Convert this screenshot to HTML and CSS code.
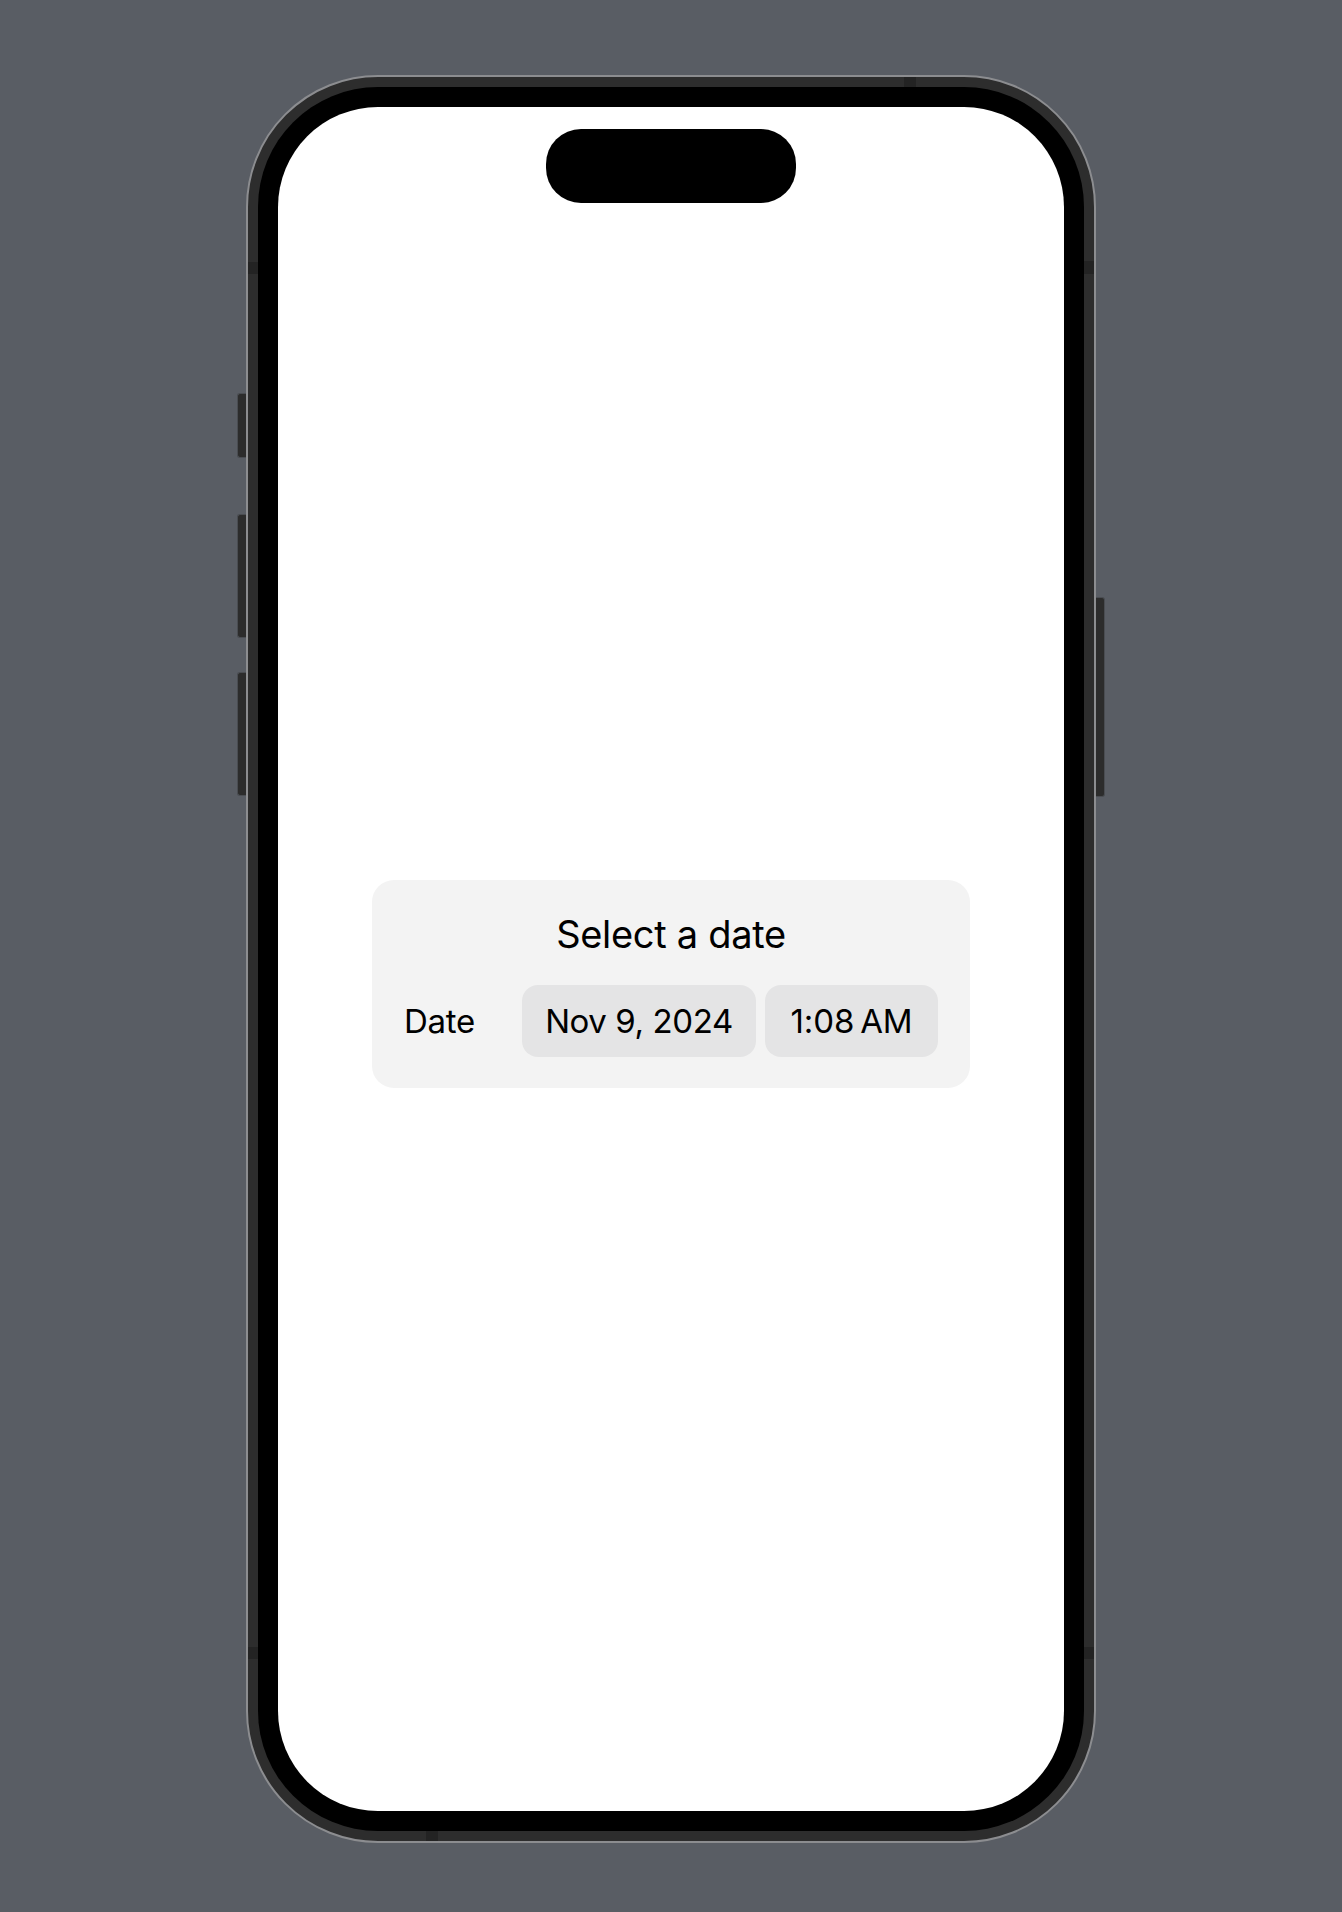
FILE: index.html
```html
<!DOCTYPE html>
<html lang="en">
<head>
<meta charset="utf-8">
<title>Select a date</title>
<link rel="stylesheet" href="styles.css">
</head>
<body>
  <div class="stage">
    <div class="device">
      <span class="side-btn left b1"></span>
      <span class="side-btn left b2"></span>
      <span class="side-btn left b3"></span>
      <span class="side-btn right b4"></span>
      <div class="frame">
        <span class="band-mark m-top"></span>
        <span class="band-mark m-left1"></span>
        <span class="band-mark m-right1"></span>
        <span class="band-mark m-left2"></span>
        <span class="band-mark m-right2"></span>
        <span class="band-mark m-bottom"></span>
        <div class="bezel">
          <div class="screen">
            <div class="island"></div>
            <div class="card">
              <div class="card-title">Select a date</div>
              <div class="card-row">
                <span class="row-label">Date</span>
                <div class="pickers">
                  <span class="pill pill-date">Nov 9, 2024</span>
                  <span class="pill pill-time">1:08&#8201;AM</span>
                </div>
              </div>
            </div>
          </div>
        </div>
      </div>
    </div>
  </div>
</body>
</html>
```
FILE: styles.css
```css
html, body {
  margin: 0;
  padding: 0;
}
body {
  background: #595d64;
  font-family: "Inter", "Roboto", "Liberation Sans", sans-serif;
  color: #000;
}
.stage {
  width: 1342px;
  height: 1912px;
  display: flex;
  justify-content: center;
  align-items: flex-start;
  padding-top: 75px;
  box-sizing: border-box;
}
.device {
  position: relative;
  width: 850px;
  height: 1768px;
}
.side-btn {
  position: absolute;
  width: 9px;
  background: #2c2c2c;
  border: 1px solid #4a4d52;
  box-sizing: border-box;
}
.side-btn.left {
  left: -9px;
  border-right: none;
  border-radius: 3px 0 0 3px;
}
.side-btn.right {
  right: -9px;
  border-left: none;
  border-radius: 0 3px 3px 0;
}
.b1 { top: 318px; height: 65px; }
.b2 { top: 439px; height: 124px; }
.b3 { top: 597px; height: 124px; }
.b4 { top: 522px; height: 200px; }
.frame {
  position: relative;
  width: 100%;
  height: 100%;
  box-sizing: border-box;
  border: 2px solid #8c8d90;
  background: #2d2d2d;
  border-radius: 132px;
  padding: 10px;
}
.band-mark {
  position: absolute;
  background: #232323;
}
.m-top { top: 0; left: 656px; width: 12px; height: 10px; }
.m-left1 { left: 0; top: 185px; width: 10px; height: 12px; }
.m-right1 { right: 0; top: 184px; width: 10px; height: 13px; }
.m-left2 { left: 0; top: 1570px; width: 10px; height: 12px; }
.m-right2 { right: 0; top: 1570px; width: 10px; height: 12px; }
.m-bottom { bottom: 0; left: 178px; width: 12px; height: 10px; }
.bezel {
  position: relative;
  width: 100%;
  height: 100%;
  box-sizing: border-box;
  background: #000;
  border-radius: 120px;
  padding: 20px;
}
.screen {
  position: relative;
  width: 100%;
  height: 100%;
  box-sizing: border-box;
  background: #fff;
  border-radius: 100px;
  padding: 118px 0 68px;
  display: flex;
  align-items: center;
  justify-content: center;
}
.island {
  position: absolute;
  top: 22px;
  left: 50%;
  width: 250px;
  height: 74px;
  margin-left: -125px;
  background: #000;
  border-radius: 35px;
}
.card {
  width: 598px;
  box-sizing: border-box;
  background: #f3f3f3;
  border-radius: 22px;
  padding: 30px 32px 31px;
  display: flex;
  flex-direction: column;
  gap: 27px;
}
.card-title {
  text-align: center;
  font-size: 38px;
  line-height: 48px;
  letter-spacing: -0.3px;
}
.card-row {
  display: flex;
  align-items: center;
  justify-content: space-between;
}
.row-label {
  font-size: 33px;
  letter-spacing: -0.3px;
}
.pickers {
  display: flex;
  gap: 9px;
}
.pill {
  height: 72px;
  display: flex;
  align-items: center;
  justify-content: center;
  background: #e4e4e5;
  border-radius: 16px;
  font-size: 33px;
  letter-spacing: -0.4px;
  box-sizing: border-box;
}
.pill-time { letter-spacing: -0.1px; }
.pill-date { width: 234px; }
.pill-time { width: 173px; }
```
